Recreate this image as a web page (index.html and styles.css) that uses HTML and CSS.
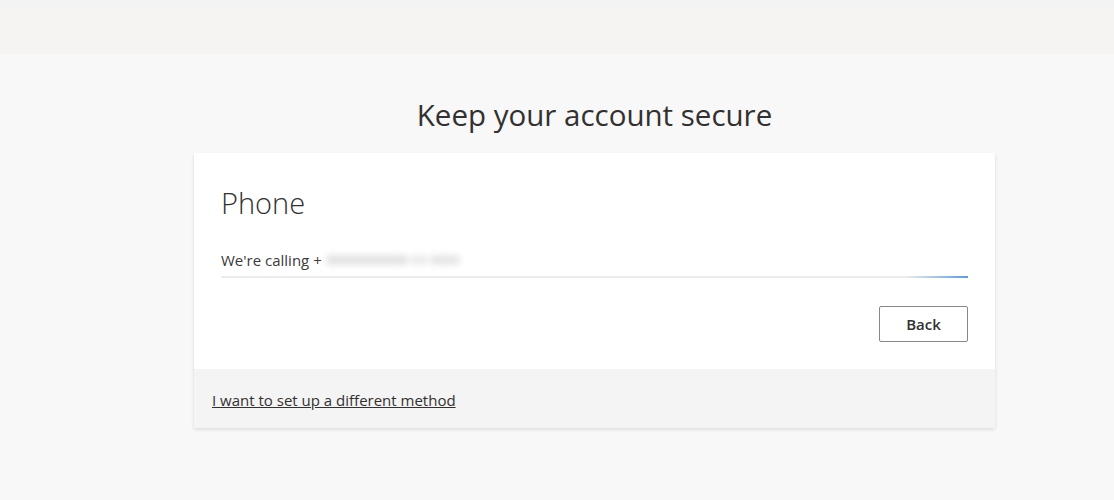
FILE: index.html
```html
<!DOCTYPE html>
<html>
<head>
<meta charset="utf-8">
<link rel="stylesheet" href="styles.css">
</head>
<body>
<div class="topbar"><div class="topstrip"></div></div>
<main class="main">
  <h1 class="title">Keep your account secure</h1>
  <section class="card">
    <div class="card-body">
      <h2 class="method">Phone</h2>
      <div class="calling">
        <span>We're calling +</span><span class="blur-num"><span class="b1"></span><span class="b2"></span><span class="b3"></span></span>
      </div>
      <div class="progress"><div class="progress-fill"></div></div>
      <div class="actions">
        <button class="btn">Back</button>
      </div>
    </div>
    <div class="card-footer">
      <a class="link" href="#">I want to set up a different method</a>
    </div>
  </section>
</main>
</body>
</html>
```

FILE: styles.css
```css
* { box-sizing: border-box; }
html, body { margin: 0; padding: 0; }
body {
  background: #f8f8f8;
  font-family: "Open Sans", "Noto Sans", sans-serif;
  color: #323130;
  width: 1114px;
  height: 500px;
  overflow: hidden;
}
.topbar {
  height: 54px;
  background: #f5f4f2;
}
.topstrip {
  height: 9px;
  background: #f3f3f3;
}
.main {
  display: flex;
  flex-direction: column;
  align-items: center;
  padding-left: 75px;
}
.title {
  margin: 40px 0 0 0;
  font-weight: 400;
  font-size: 29.5px;
  line-height: 42px;
  color: #323130;
}
.card {
  margin-top: 17px;
  width: 801px;
  background: #fff;
  box-shadow: 0 1.6px 3.6px rgba(0,0,0,0.13), 0 0.3px 0.9px rgba(0,0,0,0.11);
}
.card-body {
  padding: 30px 27px 27px 27px;
}
.method {
  margin: 0;
  font-weight: 300;
  font-size: 29px;
  line-height: 40px;
  color: #323130;
}
.calling {
  margin-top: 27px;
  display: flex;
  align-items: center;
  font-size: 15px;
  line-height: 20px;
  color: #3b3a39;
}
.blur-num {
  display: flex;
  align-items: center;
  gap: 2px;
  margin-left: 4px;
  filter: blur(3px);
}
.blur-num span { display: block; height: 10px; border-radius: 4px; }
.b1 { width: 82px; background: #e3e3e3; }
.b2 { width: 18px; background: #ececec; }
.b3 { width: 30px; background: #e6e6e6; }
.progress {
  margin-top: 6px;
  height: 2px;
  background: #ebebeb;
  display: flex;
  justify-content: flex-end;
}
.progress-fill {
  width: 62px;
  height: 2px;
  background: linear-gradient(to right, rgba(90,155,235,0), #5a9beb);
}
.actions {
  display: flex;
  justify-content: flex-end;
  margin-top: 28px;
}
.btn {
  width: 89px;
  height: 36px;
  border: 1px solid #8a8886;
  border-radius: 2px;
  background: #fff;
  font-family: inherit;
  font-size: 15px;
  font-weight: 600;
  color: #323130;
  padding: 0;
}
.card-footer {
  background: #f4f4f4;
  height: 59px;
  padding: 21px 18px 0 18px;
}
.link {
  display: block;
  width: max-content;
  font-size: 15px;
  line-height: 20px;
  color: #323130;
  text-decoration: underline;
}
```
